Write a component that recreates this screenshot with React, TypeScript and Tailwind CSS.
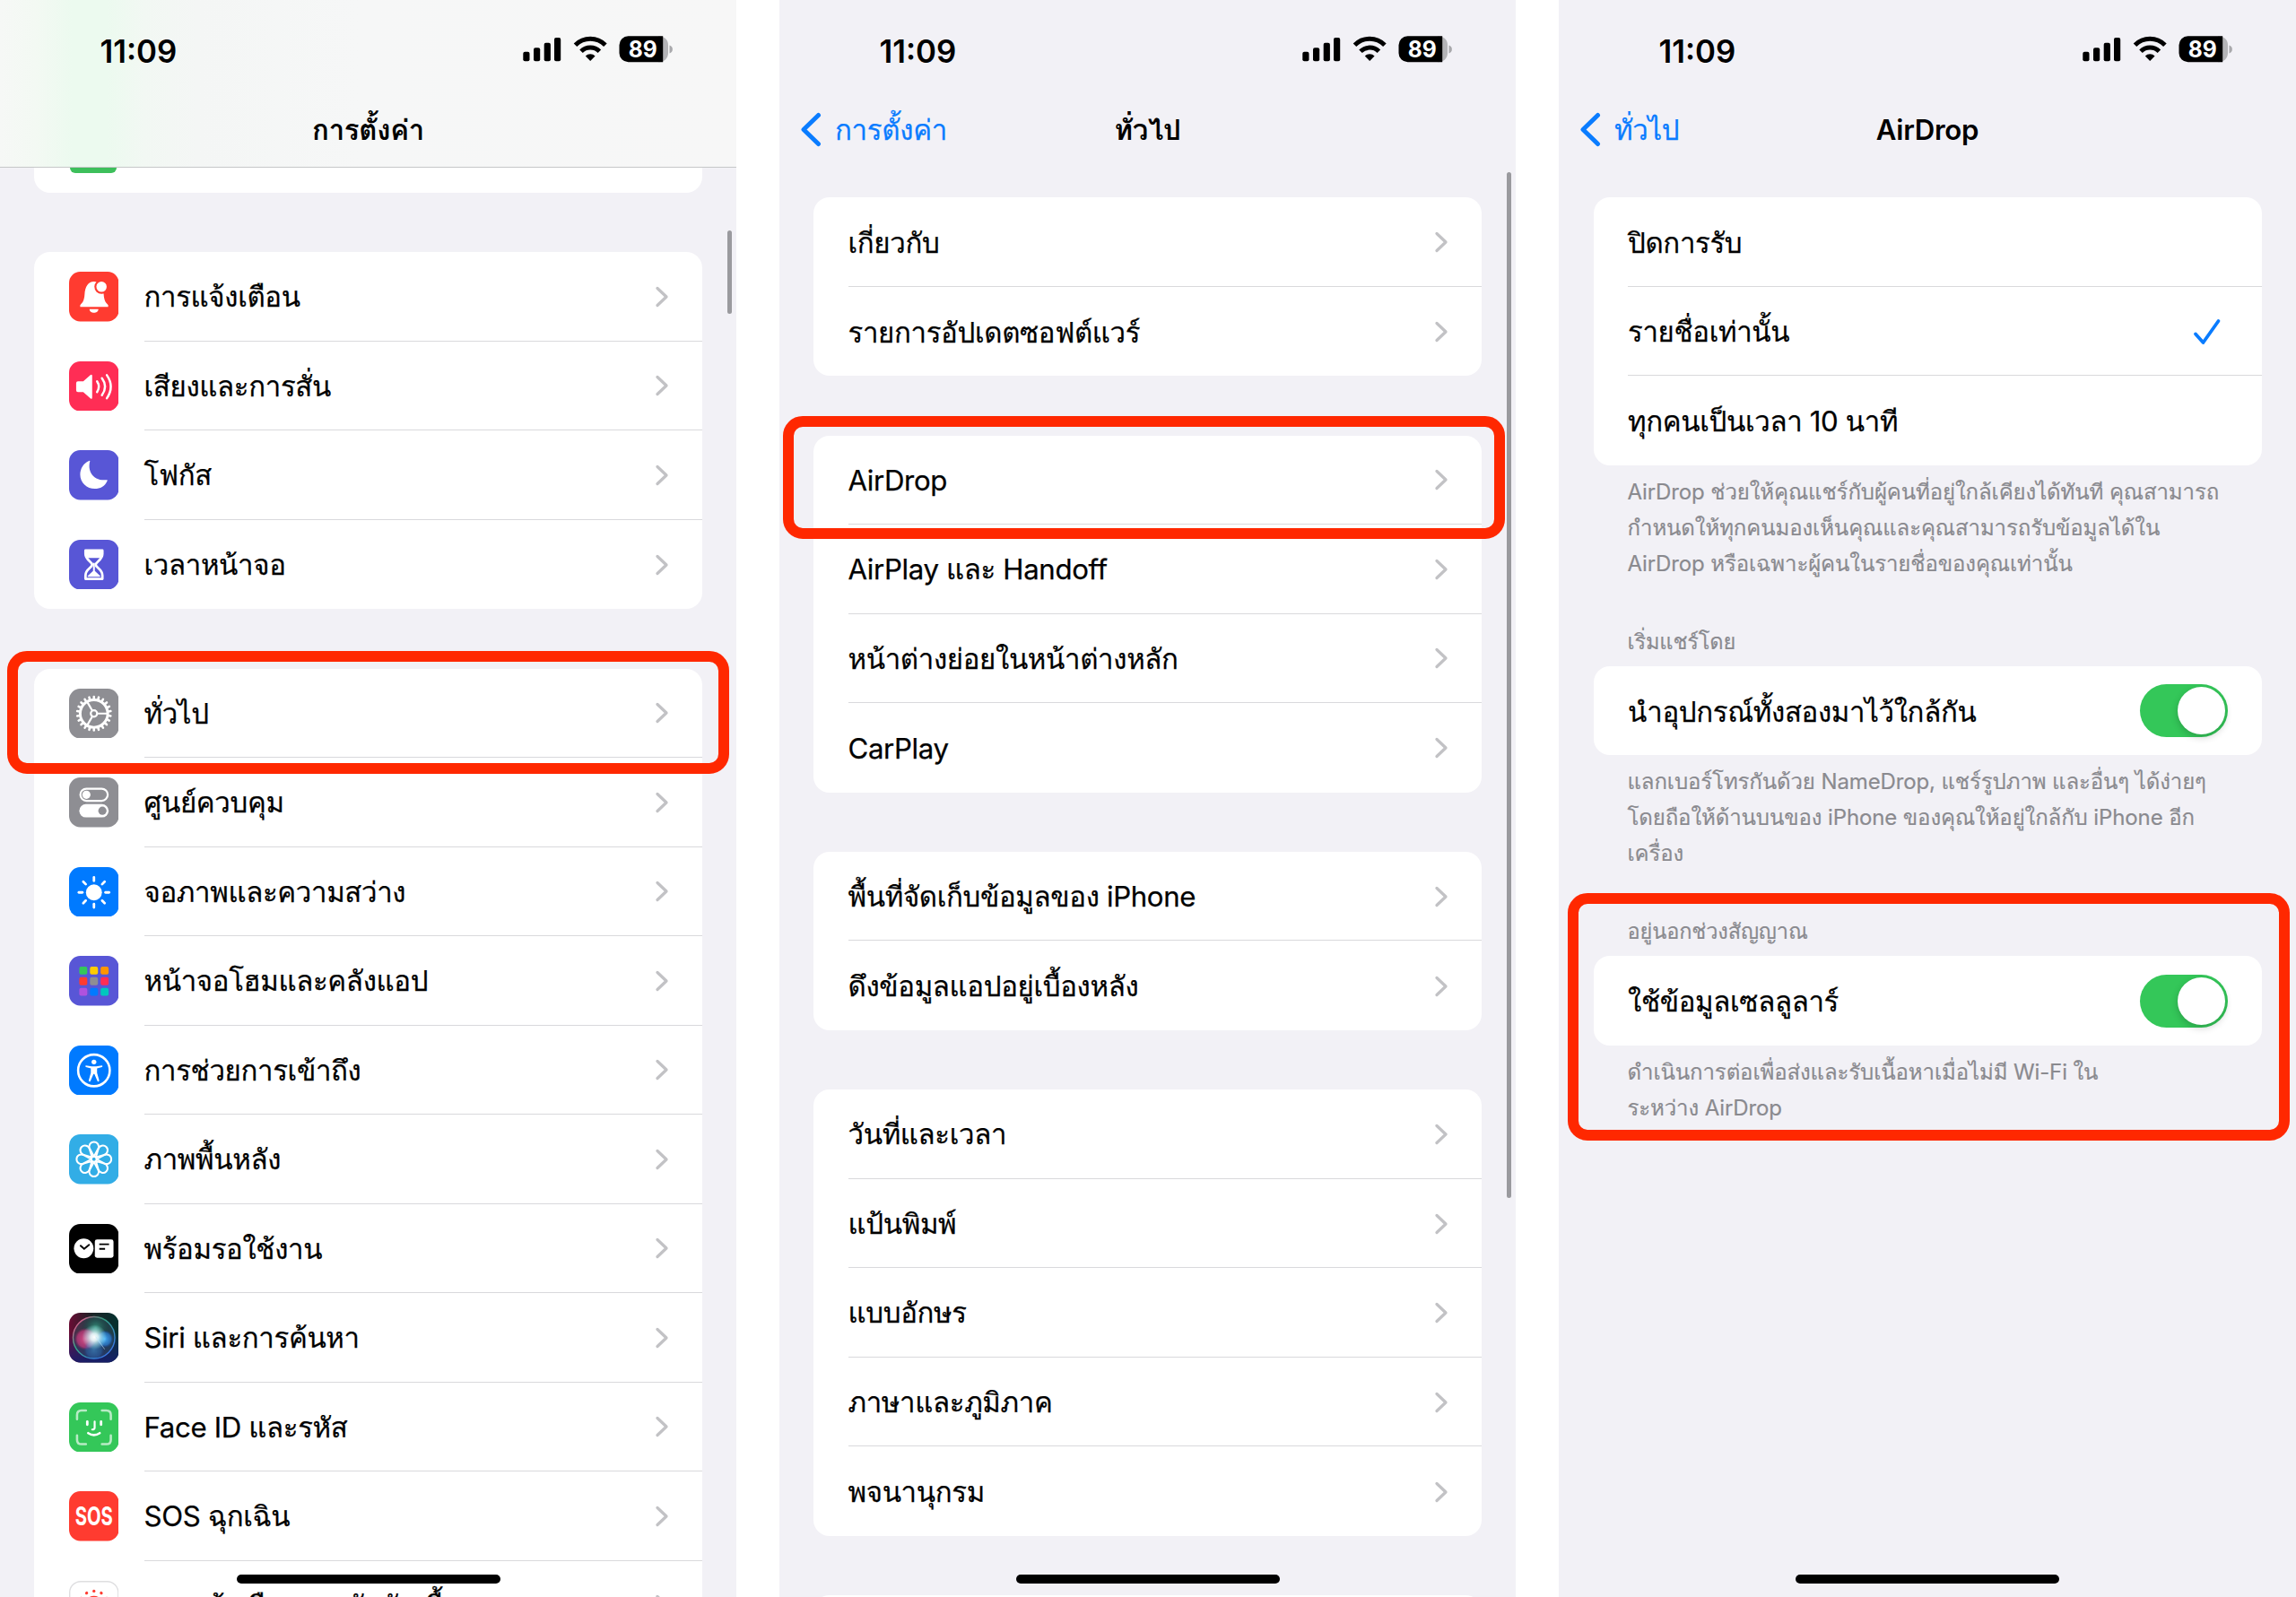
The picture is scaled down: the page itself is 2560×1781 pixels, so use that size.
import type { ReactNode } from "react";

function StatusBar() {
  return (
    <div className="flex h-[110px] items-center justify-between pl-[111.500px] pr-[70px]">
      <div className="pt-[4px] text-[34.800px] font-semibold leading-none">11:09</div>
      <svg width="169" height="32" viewBox="0 0 169 32">
        <rect x="1.300" y="18.700" width="7.200" height="10.600" rx="2" />
        <rect x="13" y="14.300" width="7.200" height="15" rx="2" />
        <rect x="24.700" y="8.700" width="7.200" height="20.600" rx="2" />
        <rect x="36" y="3" width="7.200" height="26.300" rx="2" />
        <g fill="none" stroke="#000" strokeWidth="5">
          <path d="M59.500 11.200a23.500 23.500 0 0 1 33.400 0" />
          <path d="M66 18.300a14.500 14.500 0 0 1 20.400 0" />
        </g>
        <path d="M76.200 29l-5.400-5.500a7.700 7.700 0 0 1 10.800 0z" />
        <path d="M152 1.300a10 10 0 0 1 11 10v9a10 10 0 0 1-11 10z" fill="#b4b4b7" />
        <path d="M118.500 1.300H157.200v29H118.500a10 10 0 0 1-10-10v-9a10 10 0 0 1 10-10z" />
        <path d="M164.500 11.500c4.500 1 4.500 8 0 9z" fill="#a9a9ac" />
        <text x="134.700" y="25" textAnchor="middle" fontSize="26" fontWeight="700" fill="#fff" textLength="32" lengthAdjust="spacingAndGlyphs">89</text>
      </svg>
    </div>
  );
}

function NavBar({ title, back }: { title: string; back?: string }) {
  return (
    <div className="relative flex h-[76px] items-center justify-center">
      {back && (
        <div className="absolute left-[23px] top-[13px] flex h-[42px] items-center gap-[15px] text-[#0a7cff]">
          <svg width="24" height="40" viewBox="0 0 24 40" fill="none" stroke="currentColor" strokeWidth="5" strokeLinecap="round" strokeLinejoin="round">
            <path d="M20.500 4.500L4 20.500l16.500 16" />
          </svg>
          <span className="pt-[3px] text-[31.200px] leading-none tracking-[-0.3px] [-webkit-text-stroke:0.25px]">{back}</span>
        </div>
      )}
      <span className="-mt-[5px] text-[31.200px] font-semibold leading-none tracking-[-0.3px]">{title}</span>
    </div>
  );
}

function Chevron() {
  return (
    <svg className="mr-[36.500px] mt-px shrink-0" width="18" height="26" viewBox="0 0 18 26" fill="none" stroke="#c2c2c5" strokeWidth="3.300" strokeLinecap="round" strokeLinejoin="round">
      <path d="M4 3.500L14 13L4 22.500" />
    </svg>
  );
}

function Card({ children }: { children: ReactNode }) {
  return <div className="w-[745px] shrink-0 overflow-hidden rounded-[18px] bg-white">{children}</div>;
}

function Row({ label, icon, trailing, last }: { label: string; icon?: ReactNode; trailing?: ReactNode; last?: boolean }) {
  return (
    <div className="flex h-[99.500px] pl-[38.500px]">
      {icon && <div className="flex w-[84px] items-center">{icon}</div>}
      <div className={last ? "flex flex-1 items-center justify-between" : "flex flex-1 items-center justify-between border-b border-[#d9d9dc]"}>
        <span className="whitespace-nowrap pt-[3px] text-[31.200px] leading-none tracking-[-0.35px] [-webkit-text-stroke:0.25px]">{label}</span>
        {trailing === undefined ? <Chevron /> : trailing}
      </div>
    </div>
  );
}

function Tile({ bg, children }: { bg: string; children?: ReactNode }) {
  return (
    <svg width="55.500" height="55.500" viewBox="0 0 56 56">
      <rect width="56" height="56" rx="12.500" fill={bg} />
      {children}
    </svg>
  );
}

const petals = [0, 45, 90, 135, 180, 225, 270, 315];
const dots = Array.from({ length: 12 }, (_, i) => i * 30);
const teeth = Array.from({ length: 22 }, (_, i) => (i * 360) / 22);

const BellIcon = (
  <Tile bg="#ff3b30">
    <path d="M12.500 39.500v-2c3-3 4.500-5 5-12 .5-8.500 4-14.500 10.500-14.500 7 0 10.500 6 11 14.500.5 7 2 9 5 12v2z" fill="#fff" />
    <path d="M23 42h10c0 5.500-10 5.500-10 0z" fill="#fff" />
    <circle cx="36.500" cy="17" r="8" fill="#ff3b30" />
    <circle cx="36.500" cy="17" r="5.800" fill="#fff" />
  </Tile>
);
const SoundIcon = (
  <Tile bg="#ff2d55">
    <path d="M10 22.500h6l8-7q2-1.500 2 1v24q0 2.500-2 1l-8-7h-6q-2 0-2-2v-8q0-2 2-2z" fill="#fff" />
    <g fill="none" stroke="#fff" strokeWidth="2.500" strokeLinecap="round">
      <path d="M31.500 22.500q4 6 0 12" />
      <path d="M37 19q7 9.500 0 19" />
      <path d="M42.500 15.500q9 13 0 26" />
    </g>
  </Tile>
);
const MoonIcon = (
  <Tile bg="#5856d6">
    <path d="M23.500 12.500c-3 10 3 22.500 18.500 21 1-.2 1.300.3 1 1-2.500 6-8 9-14 9-9 0-16.500-7-16.500-16 0-7 4-13 10-15.500.8-.3 1.200 0 1 .5z" fill="#fff" />
  </Tile>
);
const HourglassIcon = (
  <Tile bg="#5856d6">
    <path d="M18.500 12h19v4c0 7-7.500 8.500-7.500 12s7.500 5 7.500 12v4h-19v-4c0-7 7.500-8.500 7.500-12s-7.500-5-7.500-12z" fill="none" stroke="#fff" strokeWidth="2.800" strokeLinejoin="round" />
    <path d="M19 12h18v5q-.5 2-2 3.500H21q-2-2-2-3.500z" fill="#fff" />
    <path d="M27 26h2v9l6 5.500q1 1-1 1H22q-2 0-1-1l6-5.500z" fill="#fff" />
  </Tile>
);
const GearIcon = (
  <Tile bg="#8e8e93">
    <g stroke="#fff" fill="none">
      {teeth.map((a) => (
        <path key={a} d="M28 11.500V9" strokeWidth="2.600" strokeLinecap="round" transform={`rotate(${a} 28 28)`} />
      ))}
      <circle cx="28" cy="28" r="15.500" strokeWidth="3" />
      <circle cx="28" cy="28" r="3.600" strokeWidth="2.200" />
      {[90, 210, 330].map((a) => (
        <path key={a} d="M28 24V13" strokeWidth="2.200" transform={`rotate(${a} 28 28)`} />
      ))}
    </g>
  </Tile>
);
const ControlIcon = (
  <Tile bg="#8e8e93">
    <rect x="12.700" y="12.700" width="30.800" height="13.600" rx="6.800" fill="none" stroke="#fff" strokeWidth="2.200" />
    <circle cx="19.500" cy="19.500" r="4.600" fill="#fff" />
    <rect x="11.500" y="30" width="33" height="15" rx="7.500" fill="#fff" />
    <circle cx="37.500" cy="37.500" r="4.600" fill="#8e8e93" />
  </Tile>
);
const SunIcon = (
  <Tile bg="#007aff">
    <circle cx="28" cy="28.500" r="9" fill="#fff" />
    {petals.map((a) => (
      <path key={a} d="M28 11.500v4" stroke="#fff" strokeWidth="2.800" strokeLinecap="round" transform={`rotate(${a} 28 28.500)`} />
    ))}
  </Tile>
);
const appColors = ["#34c759", "#ffcc00", "#ff9500", "#ff3b30", "#8e8e93", "#ff2d55", "#af52de", "#007aff", "#00c7be"];
const HomeIcon = (
  <Tile bg="#5856d6">
    {appColors.map((c, i) => (
      <rect key={c} x={11.5 + (i % 3) * 12} y={12 + Math.floor(i / 3) * 12} width="9" height="9" rx="2" fill={c} />
    ))}
  </Tile>
);
const AccessIcon = (
  <Tile bg="#007aff">
    <circle cx="28" cy="28" r="17.800" fill="none" stroke="#fff" strokeWidth="2.600" />
    <circle cx="28" cy="18.500" r="2.700" fill="#fff" />
    <path d="M19 22.500l6.500 1h5l6.500-1q1.500.8 0 1.800l-5.500 1.400v5l2.500 9q-.8 1.500-2 .3L28.500 32h-1L24 40q-1.200 1.200-2-.3l2.500-9v-5L19 24.300q-1.500-1 0-1.800z" fill="#fff" />
  </Tile>
);
const FlowerIcon = (
  <Tile bg="#32ade6">
    <g fill="none" stroke="#fff" strokeWidth="2">
      {petals.map((a) => (
        <path key={a} d="M28 25l-4.600-8.600a5.300 5.300 0 1 1 9.200 0z" strokeLinejoin="round" transform={`rotate(${a} 28 28)`} />
      ))}
      <circle cx="28" cy="28" r="3" />
    </g>
  </Tile>
);
const StandbyIcon = (
  <Tile bg="#000">
    <circle cx="16.500" cy="27.500" r="11" fill="#fff" />
    <path d="M13 24.500l4 3.500 5.500-4.500" fill="none" stroke="#000" strokeWidth="2" strokeLinecap="round" />
    <rect x="29" y="17.500" width="21" height="20.500" rx="2.500" fill="#fff" />
    <path d="M34 22.800h11M34 28h6.500" stroke="#000" strokeWidth="1.800" />
  </Tile>
);
const SiriIcon = (
  <svg width="55.500" height="55.500" viewBox="0 0 56 56">
    <defs>
      <linearGradient id="siriBg" x1="0" y1="0" x2="1" y2="0">
        <stop offset="0" stopColor="#6a0c34" />
        <stop offset="0.45" stopColor="#1d2226" />
        <stop offset="1" stopColor="#04322f" />
      </linearGradient>
      <linearGradient id="siriLow" x1="0" y1="0" x2="0" y2="1">
        <stop offset="0.4" stopColor="#1a2a8a" stopOpacity="0" />
        <stop offset="1" stopColor="#171c6e" stopOpacity="0.9" />
      </linearGradient>
      <radialGradient id="siriPink">
        <stop offset="0" stopColor="#e8508c" stopOpacity="0.95" />
        <stop offset="0.75" stopColor="#c8387c" stopOpacity="0.7" />
        <stop offset="1" stopColor="#a01c5c" stopOpacity="0" />
      </radialGradient>
      <radialGradient id="siriBlue">
        <stop offset="0" stopColor="#4ab4ff" stopOpacity="0.95" />
        <stop offset="0.7" stopColor="#2b7fd8" stopOpacity="0.7" />
        <stop offset="1" stopColor="#1440a8" stopOpacity="0" />
      </radialGradient>
      <radialGradient id="siriGreen">
        <stop offset="0" stopColor="#3c9c84" stopOpacity="0.9" />
        <stop offset="1" stopColor="#0a4a40" stopOpacity="0" />
      </radialGradient>
      <radialGradient id="siriCore">
        <stop offset="0" stopColor="#fff" />
        <stop offset="0.3" stopColor="#e8ffff" stopOpacity="0.9" />
        <stop offset="1" stopColor="#9ff" stopOpacity="0" />
      </radialGradient>
      <linearGradient id="siriRing" x1="0" y1="0.3" x2="0.7" y2="1">
        <stop offset="0" stopColor="#c8648c" />
        <stop offset="0.35" stopColor="#36a888" />
        <stop offset="1" stopColor="#3a78e0" />
      </linearGradient>
    </defs>
    <rect width="56" height="56" rx="12.500" fill="url(#siriBg)" />
    <rect width="56" height="56" rx="12.500" fill="url(#siriLow)" />
    <circle cx="28" cy="28" r="23.500" fill="#3a5468" fillOpacity="0.45" stroke="url(#siriRing)" strokeWidth="1.400" />
    <circle cx="30" cy="17" r="16" fill="url(#siriGreen)" />
    <circle cx="18.500" cy="29.500" r="12.500" fill="url(#siriPink)" />
    <circle cx="40" cy="29.500" r="10" fill="url(#siriBlue)" />
    <circle cx="28" cy="42" r="12" fill="url(#siriBlue)" opacity="0.45" />
    <circle cx="28.500" cy="27.500" r="14" fill="url(#siriCore)" />
    <path d="M30 27l10 14" stroke="#bfe8ff" strokeWidth="1" opacity="0.6" />
  </svg>
);
const FaceIcon = (
  <Tile bg="#34c759">
    <g fill="none" stroke="#fff" strokeLinecap="round">
      <g strokeWidth="2.600" opacity="0.65">
        <path d="M9 19v-5q0-5 5-5h5M37 9h5q5 0 5 5v5M47 37v5q0 5-5 5h-5M19 47h-5q-5 0-5-5v-5" />
      </g>
      <path d="M20.500 21.500v3.500M36 21.500v3.500" strokeWidth="2.800" />
      <path d="M28.800 21.500v7q0 2-2.800 2" strokeWidth="2.200" />
      <path d="M21.500 34.500q6.500 4.500 13 0" strokeWidth="2.600" />
    </g>
  </Tile>
);
const SosIcon = (
  <Tile bg="#ff3b30">
    <text x="28" y="38.500" textAnchor="middle" fontSize="28.500" fontWeight="700" fill="#fff" textLength="42.500" lengthAdjust="spacingAndGlyphs">SOS</text>
  </Tile>
);
const ExposureIcon = (
  <svg width="55.500" height="55.500" viewBox="0 0 56 56">
    <rect x="0.700" y="0.700" width="54.600" height="54.600" rx="12.500" fill="#fff" stroke="#dedee0" strokeWidth="1.400" />
    <circle cx="28" cy="28" r="11" fill="#ff3b30" />
    {dots.map((a) => (
      <circle key={a} cx="28" cy="11.500" r="1.700" fill="#ff3b30" transform={`rotate(${a} 28 28)`} />
    ))}
  </svg>
);

function Toggle() {
  return (
    <div className="mr-[38px] flex h-[59px] w-[98px] items-center justify-end rounded-full bg-[#34c759] pr-[3px]">
      <div className="h-[53px] w-[53px] rounded-full bg-white shadow-[0_3px_8px_rgba(0,0,0,0.2)]" />
    </div>
  );
}

function Check() {
  return (
    <svg className="mr-[44px] mt-px" width="34" height="32" viewBox="0 0 34 32" fill="none" stroke="#0a7cff" strokeWidth="3.800" strokeLinecap="round" strokeLinejoin="round">
      <path d="M4 18.500l8.500 9.500L29.500 4" />
    </svg>
  );
}

function HomeIndicator() {
  return <div className="absolute left-[264px] top-[1756px] h-[10px] w-[294px] rounded-full bg-black" />;
}

function Note({ lines }: { lines: string[] }) {
  return (
    <div className="pl-[38px] pt-[10px] text-[24px] leading-[40px] tracking-[-0.12px] text-[#8a8a8f] [-webkit-text-stroke:0.2px]">
      {lines.map((l) => (
        <div key={l} className="whitespace-nowrap">{l}</div>
      ))}
    </div>
  );
}

function Heading({ text }: { text: string }) {
  return <div className="h-[47px] pl-[38px] text-[23.600px] leading-[40px] tracking-[-0.15px] text-[#8a8a8f] [-webkit-text-stroke:0.2px]">{text}</div>;
}

function SettingsScreen() {
  return (
    <div className="relative h-[1781px] w-[821px] overflow-hidden bg-[#f2f1f6]">
      <div className="h-[187px] border-b border-[#c6c7c8] bg-[linear-gradient(90deg,#f6f8f6_0px,#f3f9f3_40px,#ecfaef_80px,#ecfaef_120px,#f2f8f3_160px,#f4f6f5_220px,#f6f7f7_400px,#f7f7f7_821px)]">
        <StatusBar />
        <NavBar title="การตั้งค่า" />
      </div>
      <div className="flex flex-col gap-[66.500px] pl-[38px]">
        <div className="h-[27.500px] w-[745px] overflow-hidden rounded-b-[18px] bg-white pl-[40px]">
          <div className="h-[6px] w-[52px] rounded-b-[10px] bg-[#3dbf5b]" />
        </div>
        <Card>
          <Row icon={BellIcon} label="การแจ้งเตือน" />
          <Row icon={SoundIcon} label="เสียงและการสั่น" />
          <Row icon={MoonIcon} label="โฟกัส" />
          <Row icon={HourglassIcon} label="เวลาหน้าจอ" last />
        </Card>
        <Card>
          <Row icon={GearIcon} label="ทั่วไป" />
          <Row icon={ControlIcon} label="ศูนย์ควบคุม" />
          <Row icon={SunIcon} label="จอภาพและความสว่าง" />
          <Row icon={HomeIcon} label="หน้าจอโฮมและคลังแอป" />
          <Row icon={AccessIcon} label="การช่วยการเข้าถึง" />
          <Row icon={FlowerIcon} label="ภาพพื้นหลัง" />
          <Row icon={StandbyIcon} label="พร้อมรอใช้งาน" />
          <Row icon={SiriIcon} label="Siri และการค้นหา" />
          <Row icon={FaceIcon} label="Face ID และรหัส" />
          <Row icon={SosIcon} label="SOS ฉุกเฉิน" />
          <Row icon={ExposureIcon} label="การแจ้งเตือนการสัมผัสเชื้อ" />
        </Card>
      </div>
      <div className="absolute left-[811px] top-[257px] h-[93px] w-[5px] rounded-full bg-[#9a9a9e]" />
      <HomeIndicator />
      <div className="absolute left-[8px] top-[726px] h-[137px] w-[805px] rounded-[22px] border-[12.500px] border-[#ff2800]" />
    </div>
  );
}

function GeneralScreen() {
  return (
    <div className="relative h-[1781px] w-[821px] overflow-hidden bg-[#f2f1f6]">
      <StatusBar />
      <NavBar title="ทั่วไป" back="การตั้งค่า" />
      <div className="flex flex-col gap-[66.300px] pl-[38px] pt-[34.400px]">
        <Card>
          <Row label="เกี่ยวกับ" />
          <Row label="รายการอัปเดตซอฟต์แวร์" last />
        </Card>
        <Card>
          <Row label="AirDrop" />
          <Row label="AirPlay และ Handoff" />
          <Row label="หน้าต่างย่อยในหน้าต่างหลัก" />
          <Row label="CarPlay" last />
        </Card>
        <Card>
          <Row label="พื้นที่จัดเก็บข้อมูลของ iPhone" />
          <Row label="ดึงข้อมูลแอปอยู่เบื้องหลัง" last />
        </Card>
        <Card>
          <Row label="วันที่และเวลา" />
          <Row label="แป้นพิมพ์" />
          <Row label="แบบอักษร" />
          <Row label="ภาษาและภูมิภาค" />
          <Row label="พจนานุกรม" last />
        </Card>
        <div className="h-[40px] w-[745px] rounded-t-[18px] bg-white" />
      </div>
      <div className="absolute left-[811px] top-[192px] h-[1144px] w-[5px] rounded-full bg-[#9a9a9e]" />
      <HomeIndicator />
      <div className="absolute left-[4px] top-[464px] h-[137px] w-[805px] rounded-[22px] border-[12.500px] border-[#ff2800]" />
    </div>
  );
}

function AirDropScreen() {
  return (
    <div className="relative h-[1781px] w-[822px] overflow-hidden bg-[#f2f1f6]">
      <StatusBar />
      <NavBar title="AirDrop" back="ทั่วไป" />
      <div className="pl-[38.500px] pt-[34.400px]">
        <Card>
          <Row label="ปิดการรับ" trailing={null} />
          <Row label="รายชื่อเท่านั้น" trailing={<Check />} />
          <Row label="ทุกคนเป็นเวลา 10 นาที" trailing={null} last />
        </Card>
        <div className="h-[177px]">
          <Note
            lines={[
              "AirDrop ช่วยให้คุณแชร์กับผู้คนที่อยู่ใกล้เคียงได้ทันที คุณสามารถ",
              "กำหนดให้ทุกคนมองเห็นคุณและคุณสามารถรับข้อมูลได้ใน",
              "AirDrop หรือเฉพาะผู้คนในรายชื่อของคุณเท่านั้น",
            ]}
          />
        </div>
        <Heading text="เริ่มแชร์โดย" />
        <Card>
          <Row label="นำอุปกรณ์ทั้งสองมาไว้ใกล้กัน" trailing={<Toggle />} last />
        </Card>
        <div className="h-[177px]">
          <Note
            lines={[
              "แลกเบอร์โทรกันด้วย NameDrop, แชร์รูปภาพ และอื่นๆ ได้ง่ายๆ",
              "โดยถือให้ด้านบนของ iPhone ของคุณให้อยู่ใกล้กับ iPhone อีก",
              "เครื่อง",
            ]}
          />
        </div>
        <Heading text="อยู่นอกช่วงสัญญาณ" />
        <Card>
          <Row label="ใช้ข้อมูลเซลลูลาร์" trailing={<Toggle />} last />
        </Card>
        <Note lines={["ดำเนินการต่อเพื่อส่งและรับเนื้อหาเมื่อไม่มี Wi-Fi ใน", "ระหว่าง AirDrop"]} />
      </div>
      <HomeIndicator />
      <div className="absolute left-[10px] top-[996px] h-[276px] w-[805px] rounded-[22px] border-[12.500px] border-[#ff2800]" />
    </div>
  );
}

export default function App() {
  return (
    <div className="flex h-[1781px] w-[2560px] gap-[48px] overflow-hidden bg-white font-['Inter','Loma','Noto_Sans_Thai',sans-serif] text-black">
      <SettingsScreen />
      <GeneralScreen />
      <AirDropScreen />
    </div>
  );
}
